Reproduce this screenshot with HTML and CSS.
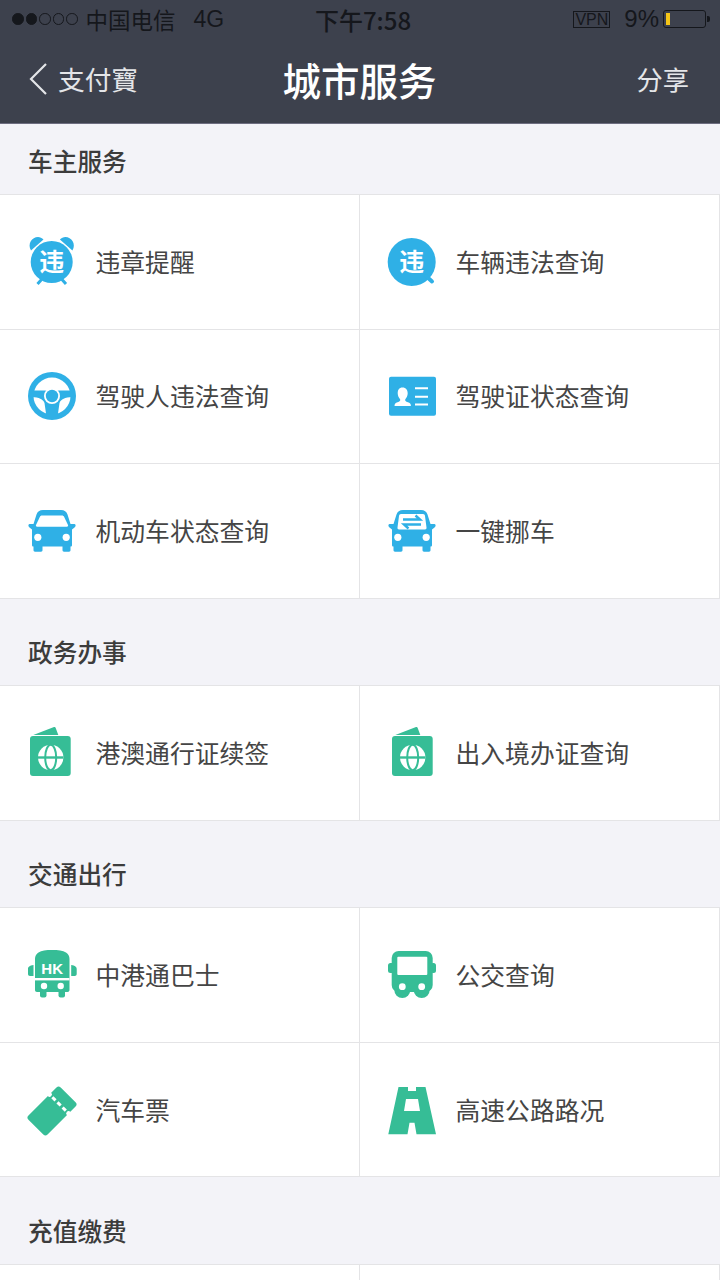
FILE: index.html
```html
<!DOCTYPE html>
<html lang="zh-CN">
<head>
  <meta charset="UTF-8">
  <title>城市服务</title>
  <link rel="stylesheet" href="styles.css">
</head>
<body>

<header class="top">
  <div class="status">
    <div class="status-left">
      <span class="dots"><i class="on"></i><i class="on"></i><i></i><i></i><i></i></span>
      <span class="carrier">中国电信</span>
      <span class="net">4G</span>
    </div>
    <div class="time">下午7:58</div>
    <div class="status-right">
      <span class="vpn">VPN</span>
      <span class="percent">9%</span>
      <span class="battery"><b></b></span>
    </div>
  </div>
  <nav class="nav">
    <a class="back">
      <svg class="chevron" viewBox="0 0 18 32"><path d="M17 1 2 16l15 15" fill="none" stroke="#e4e5e8" stroke-width="2.2"/></svg>
      <span>支付寶</span>
    </a>
    <h1>城市服务</h1>
    <a class="share">分享</a>
  </nav>
</header>

<h2 class="group-title first">车主服务</h2>
<div class="grid blue">
  <div class="cell">
    <svg class="icon" viewBox="0 0 48 48">
      <path d="M3 12.500C-1 6 4-1 10-1c2 0 4 1 5.500 2.500ZM44.400 12.500C48.400 6 43.400-1 37.400-1c-2 0-4 1-5.500 2.500Z"/>
      <path d="M9.500 46l4.500-5M38 46l-4.500-5" stroke="#2fb0e6" stroke-width="3" fill="none"/>
      <circle cx="23.700" cy="24" r="21"/>
      <text x="23.700" y="33" class="glyph">违</text>
    </svg>
    <span>违章提醒</span>
  </div>
  <div class="cell">
    <svg class="icon" viewBox="0 0 48 48">
      <circle cx="23.700" cy="24" r="24"/>
      <path d="M38 38l6 5.500" stroke="#2fb0e6" stroke-width="4" stroke-linecap="round"/>
      <text x="23.700" y="33" class="glyph">违</text>
    </svg>
    <span>车辆违法查询</span>
  </div>
  <div class="cell">
    <svg class="icon" viewBox="0 0 48 48">
      <circle cx="24" cy="24" r="24"/>
      <circle cx="24" cy="24" r="18.500" fill="#fff"/>
      <path d="M4 18.500h40V25c-7 .5-11 2-12.500 6l-2 14h-11l-2-14C15 27 11 25.500 4 25Z"/>
      <circle cx="24" cy="24" r="8" fill="#fff"/>
      <circle cx="24" cy="24" r="6.200"/>
    </svg>
    <span>驾驶人违法查询</span>
  </div>
  <div class="cell">
    <svg class="icon" viewBox="0 0 48 48">
      <rect x="1" y="4.700" width="47" height="39" rx="2"/>
      <path class="white" d="M14.500 15.500c3.500 0 5.200 2.700 5.200 5.800 0 2.500-1.200 4.700-2.400 6-.6 1.500.5 2.300 2.600 3 2 .7 3 1.500 3 3.700H6.500c0-2.200 1-3 3-3.700 2.100-.7 3.200-1.500 2.600-3-1.200-1.300-2.400-3.500-2.400-6 0-3.100 1.300-5.800 4.800-5.800Z"/>
      <path d="M27 16.300h13M27 24.700h13M27 32.500h13" stroke="#fff" stroke-width="2"/>
    </svg>
    <span>驾驶证状态查询</span>
  </div>
  <div class="cell">
    <svg class="icon" viewBox="0 0 48 48">
      <path d="M15 3h18c3.500 0 5.500 1.500 6.500 4.500L42.500 17h4c1.500 0 1.500 2.500 0 3.500L44 22.500V38c0 1-.5 1.500-1.500 1.500V43c0 1-.5 1.700-1.500 1.700h-5c-1 0-1.500-.7-1.500-1.700v-3.500h-20V43c0 1-.5 1.700-1.500 1.700H7c-1 0-1.500-.7-1.500-1.700v-3.500C4.500 39.500 4 39 4 38V22.500L1.500 20.500C0 19.500 0 17 1.500 17h4l3-9.500C9.500 4.500 11.500 3 15 3Z"/>
      <path class="white" d="M14 8.500h20c1 0 1.700.5 2.200 1.500l3.800 8c.4 1-.2 1.700-1.200 1.700H9.200c-1 0-1.600-.7-1.200-1.700l3.800-8c.5-1 1.200-1.500 2.200-1.500Z"/>
      <circle class="white" cx="9.800" cy="30.300" r="3.600"/>
      <circle class="white" cx="38.200" cy="30.300" r="3.600"/>
    </svg>
    <span>机动车状态查询</span>
  </div>
  <div class="cell">
    <svg class="icon" viewBox="0 0 48 48">
      <path d="M15 3h18c3.500 0 5.500 1.500 6.500 4.500L42.500 17h4c1.500 0 1.500 2.500 0 3.500L44 22.500V38c0 1-.5 1.500-1.500 1.500V43c0 1-.5 1.700-1.500 1.700h-5c-1 0-1.500-.7-1.500-1.700v-3.500h-20V43c0 1-.5 1.700-1.500 1.700H7c-1 0-1.500-.7-1.500-1.700v-3.500C4.500 39.500 4 39 4 38V22.500L1.500 20.500C0 19.500 0 17 1.500 17h4l3-9.500C9.500 4.500 11.500 3 15 3Z"/>
      <path class="white" d="M13 7h22c1 0 2 .7 2 2l1.500 11.500c.2 1-.5 2-1.500 2H11c-1 0-1.700-1-1.500-2L11 9c0-1.300 1-2 2-2Z"/>
      <path d="M15 12.500h17l-4.500-4M33 17.500H16l4.500 4" fill="none" stroke="#2fb0e6" stroke-width="2.400"/>
      <circle class="white" cx="9.800" cy="30.300" r="3.600"/>
      <circle class="white" cx="38.200" cy="30.300" r="3.600"/>
    </svg>
    <span>一键挪车</span>
  </div>
</div>

<h2 class="group-title">政务办事</h2>
<div class="grid green">
  <div class="cell">
    <svg class="icon" viewBox="0 0 48 48">
      <path d="M5.300 6 26-2c1-.3 1.300 0 1.700 1L30.300 6Z"/>
      <rect x="2" y="7" width="40.700" height="40" rx="3"/>
      <circle class="white" cx="22.700" cy="28.500" r="12.700"/>
      <ellipse cx="22.700" cy="28.500" rx="5.500" ry="12.700" fill="none" stroke="#36bd96" stroke-width="2"/>
      <path d="M10 28.500h25.400" stroke="#36bd96" stroke-width="2.400"/>
    </svg>
    <span>港澳通行证续签</span>
  </div>
  <div class="cell">
    <svg class="icon" viewBox="0 0 48 48">
      <path d="M7.300 6 28-2c1-.3 1.300 0 1.700 1L32.300 6Z"/>
      <rect x="4" y="7" width="40.700" height="40" rx="3"/>
      <circle class="white" cx="24.700" cy="28.500" r="12.700"/>
      <ellipse cx="24.700" cy="28.500" rx="5.500" ry="12.700" fill="none" stroke="#36bd96" stroke-width="2"/>
      <path d="M12 28.500h25.400" stroke="#36bd96" stroke-width="2.400"/>
    </svg>
    <span>出入境办证查询</span>
  </div>
</div>

<h2 class="group-title">交通出行</h2>
<div class="grid green">
  <div class="cell">
    <svg class="icon" viewBox="0 0 48 48">
      <path d="M0 18c0-2 1.500-3.500 5.500-4v11H2c-1.200 0-2-.8-2-2ZM48.700 18c0-2-1.500-3.500-5.500-4v11h3.500c1.200 0 2-.8 2-2Z"/>
      <path d="M24-1c6 0 11 .5 14 2.500 2.300 1.500 3.500 3.500 3.500 6.500v31c0 1.200-.8 2-2 2H9c-1.200 0-2-.8-2-2V8c0-3 1.200-5 3.500-6.500C13.500-.5 18-1 24-1Z"/>
      <rect x="12" y="39" width="6.500" height="7.500" rx="2"/>
      <rect x="30.500" y="39" width="6.500" height="7.500" rx="2"/>
      <text x="24.200" y="22.500" class="hk">HK</text>
      <rect class="white" x="7" y="27" width="34.500" height="2.400"/>
      <circle class="white" cx="16" cy="35" r="3.200"/>
      <circle class="white" cx="32.700" cy="35" r="3.200"/>
    </svg>
    <span>中港通巴士</span>
  </div>
  <div class="cell">
    <svg class="icon" viewBox="0 0 48 48">
      <rect x="0" y="12" width="6" height="10" rx="2.500"/>
      <rect x="42.500" y="12" width="5.500" height="10" rx="2.500"/>
      <rect x="3.700" y="0" width="41" height="41" rx="7"/>
      <circle cx="14.300" cy="39" r="8"/>
      <circle cx="33.700" cy="39" r="8"/>
      <rect class="white" x="9.300" y="5.700" width="30" height="18.300" rx="1"/>
      <circle class="white" cx="14.300" cy="35.700" r="3.400"/>
      <circle class="white" cx="33.700" cy="35.700" r="3.400"/>
    </svg>
    <span>公交查询</span>
  </div>
  <div class="cell">
    <svg class="icon" viewBox="0 0 48 48">
      <g transform="rotate(-45 24 25)">
        <rect x="1.200" y="11.500" width="45.600" height="27" rx="3"/>
        <circle class="white" cx="34" cy="11.500" r="2.400"/>
        <circle class="white" cx="34" cy="38.500" r="2.400"/>
        <path d="M34 15.500v19" stroke="#fff" stroke-width="3" stroke-dasharray="4.500 2.750"/>
      </g>
    </svg>
    <span>汽车票</span>
  </div>
  <div class="cell">
    <svg class="icon" viewBox="0 0 48 48">
      <path fill-rule="evenodd" d="M10.500 1H20v4h8V1h9.500L48 48.300H28.500l-2-11.600h-5l-2 11.600H.3ZM18 13l-2 12h16l-2-12Z"/>
    </svg>
    <span>高速公路路况</span>
  </div>
</div>

<h2 class="group-title">充值缴费</h2>
<div class="grid blue">
  <div class="cell"></div>
  <div class="cell"></div>
</div>

</body>
</html>
```
FILE: styles.css
```css
html, body { margin: 0; height: 1280px; overflow: hidden; }
body {
  background-color: #f3f3f8;
  font-family: "Noto Sans CJK SC", "Noto Sans", sans-serif;
  color: #454545;
}

.top { background-color: #3d414d; border-bottom: 1px solid #6d6d80; height: 123px; }
.status {
  display: grid;
  grid-template-columns: 1fr auto 1fr;
  align-items: center;
  height: 38px;
  padding: 0 14px 0 12px;
  color: #15171c;
}
.status-left { display: flex; align-items: center; }
.dots { display: flex; gap: 2px; margin-right: 8px; }
.dots i { width: 9.500px; height: 9.500px; border: 1px solid #15171c; border-radius: 50%; }
.dots i.on { background-color: #15171c; }
.carrier { font-size: 22.500px; }
.net { font-family: "Liberation Sans", sans-serif; font-size: 23px; margin-left: 18px; }
.time { font-size: 24px; font-weight: 500; margin-left: 8px; }
.status-right { display: flex; align-items: center; justify-content: flex-end; }
.vpn {
  border: 1px solid #15171c;
  font-family: "Liberation Sans", sans-serif;
  font-size: 16px;
  line-height: 15px;
  padding: 0 1px;
  margin-right: 14px;
}
.percent { font-family: "Liberation Sans", sans-serif; font-size: 24px; margin-right: 4px; }
.battery {
  position: relative;
  width: 41px;
  height: 16px;
  border: 1px solid #15171c;
  border-radius: 3px;
  display: block;
}
.battery b { display: block; width: 4px; height: 12px; margin: 2px; background-color: #f5c518; }
.battery::after {
  content: "";
  position: absolute;
  right: -5px;
  top: 5px;
  width: 3px;
  height: 6px;
  background-color: #15171c;
  border-radius: 0 2px 2px 0;
}

.nav {
  display: grid;
  grid-template-columns: 1fr auto 1fr;
  align-items: center;
  height: 81px;
  padding: 0 31px 4px 29px;
  color: #fff;
}
.nav h1 { margin: 0 0 0 1px; font-size: 38.500px; font-weight: 500; line-height: 50px; }
.back { display: flex; align-items: center; gap: 11px; font-size: 26.700px; color: #e4e5e8; }
.chevron { width: 18px; height: 32px; }
.share { justify-self: end; font-size: 26.300px; color: #e4e5e8; }

.group-title {
  margin: 0;
  padding: 40.400px 28px 22px;
  font-size: 24.700px;
  font-weight: 500;
  line-height: 24px;
  color: #3c3c3c;
  border-bottom: 1px solid #e4e4e6;
}
.group-title.first { padding-top: 24px; }

.grid {
  display: grid;
  grid-template-columns: 1fr 1fr;
  grid-auto-rows: 134.600px;
  background-color: #fff;
}
.cell {
  display: flex;
  align-items: center;
  gap: 20px;
  padding-left: 28px;
  font-size: 24.800px;
  box-sizing: border-box;
  border-bottom: 1px solid #e4e4e6;
  border-right: 1px solid #e4e4e6;
}
.cell span { margin: -2px 0 0 -.5px; }

.icon { width: 48px; height: 48px; flex: none; overflow: visible; }
.blue .icon { fill: #2fb0e6; }
.green .icon { fill: #36bd96; }
.icon .white { fill: #fff; }
.glyph { font-size: 25px; font-weight: 700; fill: #fff; text-anchor: middle; }
.hk { font-family: "Liberation Sans", sans-serif; font-size: 15px; font-weight: 700; fill: #fff; text-anchor: middle; }
```
